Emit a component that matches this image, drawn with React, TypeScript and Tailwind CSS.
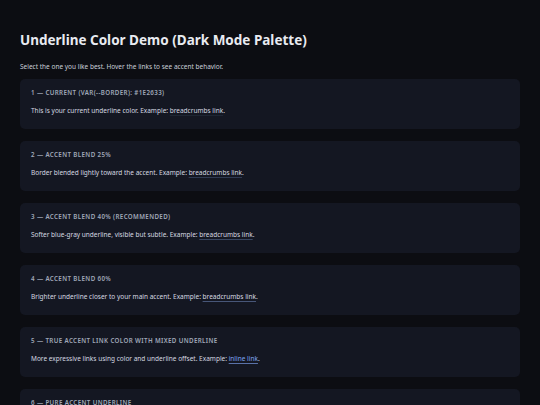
type Variant = {
    label: string;
    text: string;
    link: string;
    linkClass: string;
};

// underline colours step from the border tone toward the accent (#7aa2f7)
const VARIANTS: Variant[] = [
    {
        label: '1 — Current (var(--border): #1E2633)',
        text: 'This is your current underline color. Example: ',
        link: 'breadcrumbs link',
        linkClass: 'underline decoration-[#1e2633] underline-offset-2',
    },
    {
        label: '2 — Accent blend 25%',
        text: 'Border blended lightly toward the accent. Example: ',
        link: 'breadcrumbs link',
        linkClass: 'underline decoration-[#2f3a52] underline-offset-2',
    },
    {
        label: '3 — Accent blend 40% (recommended)',
        text: 'Softer blue-gray underline, visible but subtle. Example: ',
        link: 'breadcrumbs link',
        linkClass: 'underline decoration-[#394661] underline-offset-2',
    },
    {
        label: '4 — Accent blend 60%',
        text: 'Brighter underline closer to your main accent. Example: ',
        link: 'breadcrumbs link',
        linkClass: 'underline decoration-[#475678] underline-offset-2',
    },
    {
        label: '5 — True accent link color with mixed underline',
        text: 'More expressive links using color and underline offset. Example: ',
        link: 'inline link',
        linkClass: 'text-[#7ea4f0] underline decoration-[#5a72a8] underline-offset-2',
    },
    {
        label: '6 — Pure accent underline',
        text: 'Maximum contrast underline using the accent itself. Example: ',
        link: 'breadcrumbs link',
        linkClass: 'underline decoration-[#7aa2f7] underline-offset-2',
    },
];

const App = () => {
    return (
        <div
            className="min-h-screen bg-[#0c0d12] px-5 pt-[31px] pb-10 text-[#d4d8e0] antialiased"
            style={{ fontFamily: '"Noto Sans", "Open Sans", sans-serif' }}
        >
            <h1 className="text-[13.5px] leading-[18px] font-bold text-[#e8eaf0]">
                Underline Color Demo (Dark Mode Palette)
            </h1>
            <p className="mt-[13px] text-[6.5px] leading-[9px] text-[#c9ced8]">
                Select the one you like best. Hover the links to see accent behavior.
            </p>

            <div className="mt-[8px] flex flex-col gap-3">
                {VARIANTS.map(v => (
                    <section
                        key={v.label}
                        className="rounded-[5px] bg-[#141722] px-[11px] pt-[10px] pb-[14px]"
                    >
                        <h2 className="text-[6.2px] leading-[8px] font-semibold uppercase tracking-[0.06em] text-[#a0a8b8]">
                            {v.label}
                        </h2>
                        <p className="mt-[9px] text-[6.5px] leading-[9px] text-[#d4d8e0]">
                            {v.text}
                            <a href="#" className={v.linkClass} style={{ textDecorationThickness: '1px' }}>
                                {v.link}
                            </a>
                            .
                        </p>
                    </section>
                ))}
            </div>
        </div>
    );
};

export default App;
